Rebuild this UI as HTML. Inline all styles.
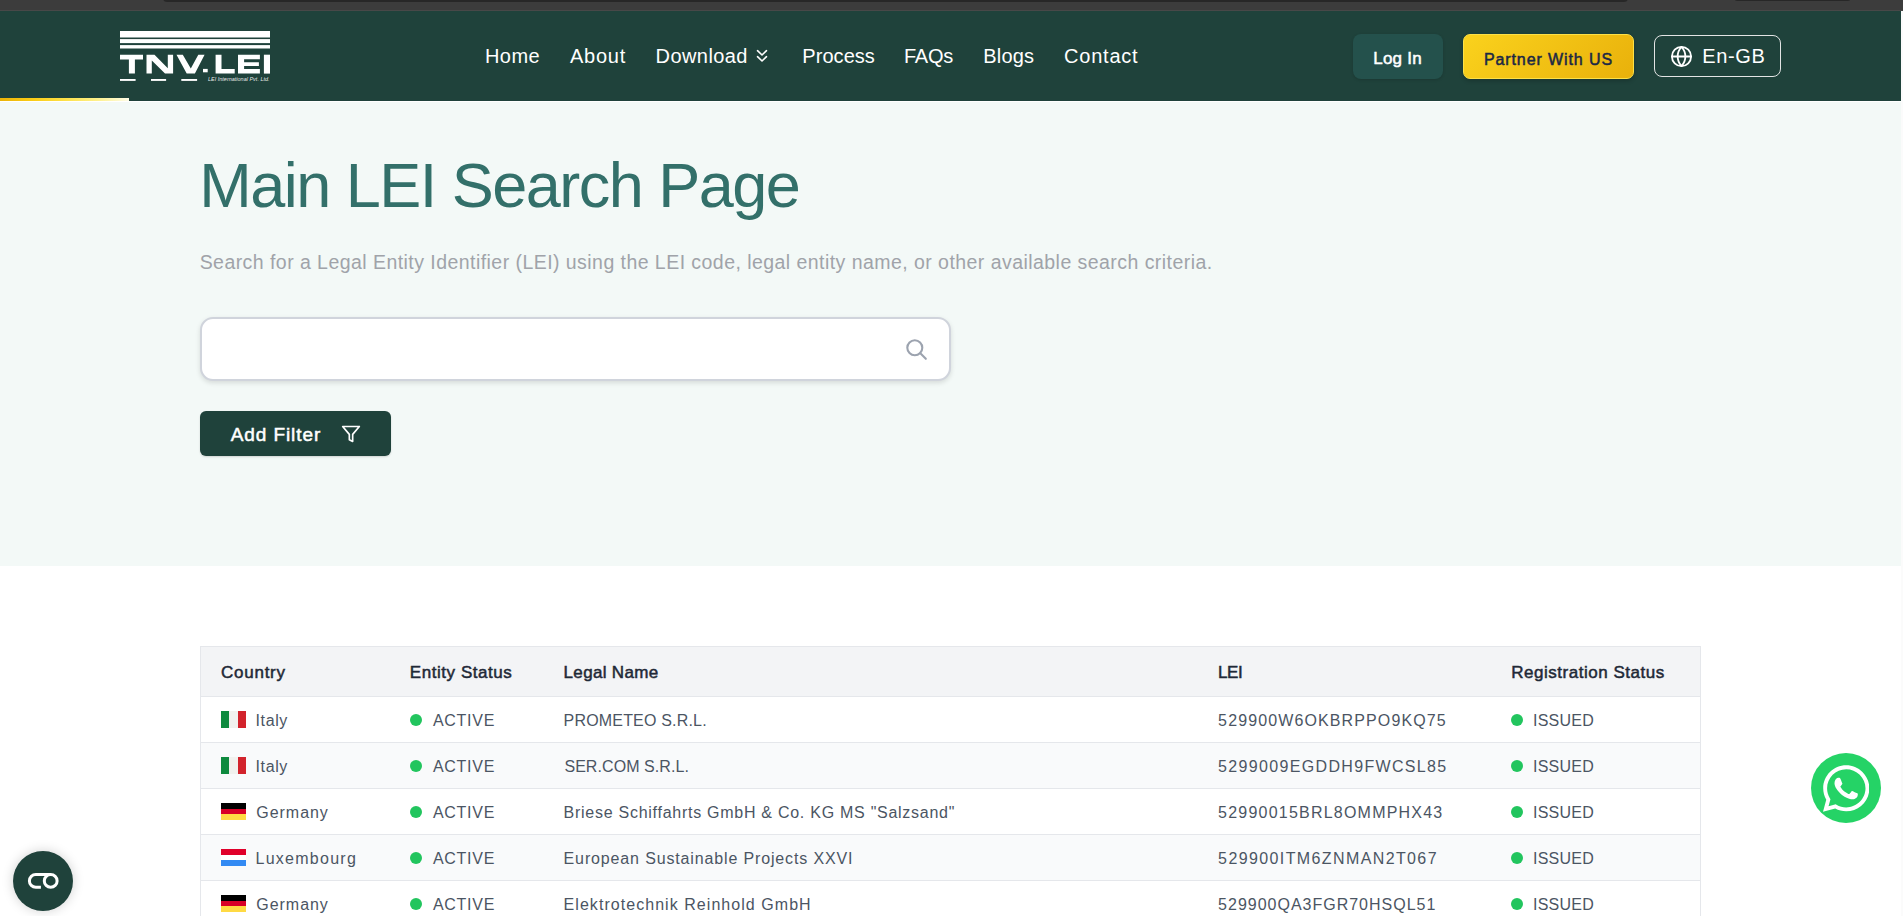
<!DOCTYPE html>
<html><head><meta charset="utf-8">
<style>
*{margin:0;padding:0;box-sizing:border-box}
html,body{width:1903px;height:916px;overflow:hidden;background:#fff;font-family:"Liberation Sans",sans-serif}
.a{position:absolute;white-space:nowrap}
.tx{line-height:1}
#topbar{left:0;top:0;width:1903px;height:11px;background:#3c3c3c;overflow:hidden}
#topbar .hl{position:absolute;left:0;top:10px;width:1903px;height:1px;background:#484848}
#topbar .t1{position:absolute;left:163px;top:-6px;width:1465px;height:8px;background:#272727;border-radius:6px}
#topbar .t2{position:absolute;left:1734px;top:-6px;width:117px;height:7px;background:#272727;border-radius:6px}
#header{left:0;top:11px;width:1901px;height:90px;background:#1f423b}
#scroll{left:1901px;top:11px;width:2px;height:905px;background:#fbfbfb}
#whiteline{left:0;top:101px;width:1901px;height:1px;background:#fff}
#progress{left:0;top:98px;width:129px;height:3px;background:linear-gradient(90deg,#eab308 0%,#facc15 25%,#fde047 50%,#fef08a 75%,#fefce8 100%)}
#hero{left:0;top:102px;width:1901px;height:464px;background:#f3f9f7}
.btn-login{left:1353px;top:34px;width:90px;height:45px;background:#24514c;border-radius:8px;box-shadow:0 1px 3px rgba(0,0,0,.15)}
.btn-partner{left:1463px;top:34px;width:171px;height:45px;border-radius:7px;background:linear-gradient(135deg,#fad21d,#e9b10b);border:1px solid #fde047;box-shadow:0 2px 4px rgba(0,0,0,.2)}
.btn-lang{left:1654px;top:35px;width:127px;height:42px;border:1.5px solid #e2e4e4;border-radius:8px}
.search{left:200px;top:317px;width:751px;height:64px;background:#fff;border:2px solid #d0d4dc;border-radius:13px;box-shadow:0 2px 5px rgba(0,0,0,.12)}
.filter{left:200px;top:411px;width:191px;height:45px;background:#1f423b;border-radius:6px;box-shadow:0 1px 2px rgba(0,0,0,.15)}
.tbl{left:200px;top:646px;width:1501px;height:300px;border:1px solid #e5e7eb;background:#fff}
.thead{left:201px;top:647px;width:1499px;height:49px;background:#f3f4f6}
.hline{left:201px;width:1499px;height:1px;background:#e5e7eb}
.zebra{left:201px;width:1499px;height:45px;background:#f9fafb}
.dot{width:12px;height:12px;border-radius:50%;background:#22c55e}
.flag{width:25px;height:17px;overflow:hidden}
.flag i{display:block;position:absolute}
#wa{left:1811px;top:753px;width:70px;height:70px;border-radius:50%;background:#25d366}
#acc{left:13px;top:851px;width:60px;height:60px;border-radius:50%;background:#1f423b;box-shadow:0 0 12px rgba(0,0,0,.18)}

</style></head><body>
<div id="topbar" class="a"><div class="t1"></div><div class="t2"></div><div class="hl"></div></div>
<div id="header" class="a"></div>
<div id="whiteline" class="a"></div>
<div id="hero" class="a"></div>
<div id="progress" class="a"></div>
<div id="scroll" class="a"></div>
<svg class="a" style="left:120px;top:31px" width="151" height="52" viewBox="0 0 151 52">
 <g fill="#fff">
  <rect x="0" y="0" width="150" height="6.5"/>
  <rect x="0" y="8.1" width="150" height="4"/>
  <rect x="0" y="14.1" width="150" height="3.4"/>
  <path d="M0 23.7H23V28.4H14.9V42.6H8.9V28.4H0Z"/>
  <path d="M26.5 42.6V23.7H34.5L47.8 37.2V23.7H53.1V42.6H45L31.8 29.6V42.6Z"/>
  <path d="M56.5 23.7H62.8L70.8 37.5L78.3 23.7H84.6L74.9 42.6H66.7Z"/>
  <rect x="83" y="37.9" width="4.7" height="3.4"/>
  <path d="M95.6 23.7H101.5V37.9H114.7V42.6H95.6Z"/>
  <path d="M118 23.7H139.9V28.3H124.1V31.2H138.9V35H124.1V38.1H139.9V42.6H118Z"/>
  <rect x="143.9" y="23.7" width="6.1" height="18.9"/>
  <rect x="0" y="48" width="15.6" height="1.9"/>
  <rect x="31" y="48" width="15.1" height="1.9"/>
  <rect x="61.3" y="48" width="15.8" height="1.9"/>
 </g>
 <text x="88" y="50" font-family="Liberation Sans" font-size="5.2" font-style="italic" fill="#fff" fill-opacity=".9" textLength="61.6" lengthAdjust="spacingAndGlyphs">LEI International Pvt. Ltd.</text>
</svg>
<svg class="a" style="left:755px;top:48px" width="14" height="16" viewBox="0 0 14 16"><path d="M2.5 2.7 L7 7 L11.5 2.7 M2.5 8.7 L7 13 L11.5 8.7" fill="none" stroke="#fff" stroke-width="1.6" stroke-linecap="round" stroke-linejoin="round"/></svg>
<div class="a btn-login"></div>
<div class="a btn-partner"></div>
<div class="a btn-lang"></div>
<svg class="a" style="left:1670px;top:44.9px" width="23" height="23" viewBox="0 0 24 24" fill="none" stroke="#fff" stroke-width="1.9" stroke-linecap="round" stroke-linejoin="round"><circle cx="12" cy="12" r="10"/><path d="M12 2a14.5 14.5 0 0 0 0 20 14.5 14.5 0 0 0 0-20"/><path d="M2 12h20"/></svg>
<div class="a search"></div>
<svg class="a" style="left:900px;top:334px" width="32" height="32" viewBox="0 0 32 32" fill="none" stroke="#9ca3af" stroke-width="2.1" stroke-linecap="round"><circle cx="14.8" cy="13.8" r="7.5"/><path d="M20.3 19.3L25.8 24.8"/></svg>
<div class="a filter"></div>
<svg class="a" style="left:340.9px;top:423.8px" width="20" height="20" viewBox="0 0 24 24" fill="none" stroke="#fff" stroke-width="2" stroke-linecap="round" stroke-linejoin="round"><polygon points="22 3 2 3 10 12.46 10 19 14 21 14 12.46 22 3"/></svg>
<div class="a tbl"></div>
<div class="a thead"></div>
<div class="a hline" style="top:696px"></div>
<div class="a zebra" style="top:743px"></div>
<div class="a hline" style="top:742px"></div>
<div class="a hline" style="top:788px"></div>
<div class="a zebra" style="top:835px"></div>
<div class="a hline" style="top:834px"></div>
<div class="a hline" style="top:880px"></div>
<div class="a flag" style="left:221px;top:711px"><i style="left:0;top:0;width:8.4px;height:17px;background:#0e8a3e"></i><i style="left:8.4px;top:0;width:8.3px;height:17px;background:#f1f1ee"></i><i style="left:16.7px;top:0;width:8.3px;height:17px;background:#d2232c"></i></div>
<div class="a dot" style="left:410px;top:714px"></div>
<div class="a dot" style="left:1511px;top:714px"></div>
<div class="a flag" style="left:221px;top:757px"><i style="left:0;top:0;width:8.4px;height:17px;background:#0e8a3e"></i><i style="left:8.4px;top:0;width:8.3px;height:17px;background:#f1f1ee"></i><i style="left:16.7px;top:0;width:8.3px;height:17px;background:#d2232c"></i></div>
<div class="a dot" style="left:410px;top:760px"></div>
<div class="a dot" style="left:1511px;top:760px"></div>
<div class="a flag" style="left:221px;top:803px"><i style="left:0;top:0;width:25px;height:5.7px;background:#000"></i><i style="left:0;top:5.7px;width:25px;height:5.6px;background:#d80027"></i><i style="left:0;top:11.3px;width:25px;height:5.7px;background:#ffda44"></i></div>
<div class="a dot" style="left:410px;top:806px"></div>
<div class="a dot" style="left:1511px;top:806px"></div>
<div class="a flag" style="left:221px;top:849px"><i style="left:0;top:0;width:25px;height:5.7px;background:#e0002a"></i><i style="left:0;top:5.7px;width:25px;height:5.6px;background:#fff"></i><i style="left:0;top:11.3px;width:25px;height:5.7px;background:#338af3"></i></div>
<div class="a dot" style="left:410px;top:852px"></div>
<div class="a dot" style="left:1511px;top:852px"></div>
<div class="a flag" style="left:221px;top:895px"><i style="left:0;top:0;width:25px;height:5.7px;background:#000"></i><i style="left:0;top:5.7px;width:25px;height:5.6px;background:#d80027"></i><i style="left:0;top:11.3px;width:25px;height:5.7px;background:#ffda44"></i></div>
<div class="a dot" style="left:410px;top:898px"></div>
<div class="a dot" style="left:1511px;top:898px"></div>
<div class="a tx" id="n1" style="left:484.88px;top:45.94px;font-size:20px;letter-spacing:0.480px;color:#ffffff;">Home</div>
<div class="a tx" id="n2" style="left:570.0px;top:45.94px;font-size:20px;letter-spacing:0.739px;color:#ffffff;">About</div>
<div class="a tx" id="n3" style="left:655.56px;top:45.94px;font-size:20px;letter-spacing:0.425px;color:#ffffff;">Download</div>
<div class="a tx" id="n4" style="left:802.28px;top:45.94px;font-size:20px;letter-spacing:0.060px;color:#ffffff;">Process</div>
<div class="a tx" id="n5" style="left:904.0px;top:45.94px;font-size:20px;letter-spacing:-0.270px;color:#ffffff;">FAQs</div>
<div class="a tx" id="n6" style="left:983.28px;top:45.94px;font-size:20px;letter-spacing:0.206px;color:#ffffff;">Blogs</div>
<div class="a tx" id="n7" style="left:1064.12px;top:45.94px;font-size:20px;letter-spacing:0.765px;color:#ffffff;">Contact</div>
<div class="a tx" id="login" style="left:1373.2px;top:49.76px;font-size:17px;letter-spacing:0.234px;color:#ffffff;-webkit-text-stroke:0.5px #ffffff;">Log In</div>
<div class="a tx" id="partner" style="left:1483.88px;top:52.38px;font-size:16px;letter-spacing:0.906px;color:#1b2845;-webkit-text-stroke:0.5px #1b2845;">Partner With US</div>
<div class="a tx" id="lang" style="left:1702.28px;top:45.80px;font-size:20px;letter-spacing:0.611px;color:#ffffff;">En-GB</div>
<div class="a tx" id="h1" style="left:199.2px;top:154.08px;font-size:63px;letter-spacing:-1.516px;color:#33706a;">Main LEI Search Page</div>
<div class="a tx" id="sub" style="left:199.64px;top:252.84px;font-size:19.5px;letter-spacing:0.450px;color:#a0a3a9;">Search for a Legal Entity Identifier (LEI) using the LEI code, legal entity name, or other available search criteria.</div>
<div class="a tx" id="filt" style="left:230.8px;top:425.32px;font-size:19px;letter-spacing:0.900px;color:#ffffff;-webkit-text-stroke:0.5px #ffffff;">Add Filter</div>
<div class="a tx" id="th1" style="left:221.08px;top:664.10px;font-size:17px;letter-spacing:0.735px;color:#1f2937;-webkit-text-stroke:0.5px #1f2937;">Country</div>
<div class="a tx" id="th2" style="left:409.84px;top:664.10px;font-size:17px;letter-spacing:0.544px;color:#1f2937;-webkit-text-stroke:0.5px #1f2937;">Entity Status</div>
<div class="a tx" id="th3" style="left:563.6px;top:664.10px;font-size:17px;letter-spacing:0.320px;color:#1f2937;-webkit-text-stroke:0.5px #1f2937;">Legal Name</div>
<div class="a tx" id="th4" style="left:1218.12px;top:664.10px;font-size:17px;letter-spacing:-0.450px;color:#1f2937;-webkit-text-stroke:0.5px #1f2937;">LEI</div>
<div class="a tx" id="th5" style="left:1511.2px;top:664.10px;font-size:17px;letter-spacing:0.525px;color:#1f2937;-webkit-text-stroke:0.5px #1f2937;">Registration Status</div>
<div class="a tx" id="r0c" style="left:255.56px;top:712.54px;font-size:16px;letter-spacing:0.604px;color:#4b5563;">Italy</div>
<div class="a tx" id="r0s" style="left:432.92px;top:712.54px;font-size:16px;letter-spacing:0.738px;color:#4b5563;">ACTIVE</div>
<div class="a tx" id="r0n" style="left:563.6px;top:712.54px;font-size:16px;letter-spacing:0.180px;color:#4b5563;">PROMETEO S.R.L.</div>
<div class="a tx" id="r0l" style="left:1218.12px;top:712.54px;font-size:16px;letter-spacing:1.118px;color:#4b5563;">529900W6OKBRPPO9KQ75</div>
<div class="a tx" id="r0i" style="left:1533.04px;top:712.54px;font-size:16px;letter-spacing:0.234px;color:#4b5563;">ISSUED</div>
<div class="a tx" id="r1c" style="left:255.56px;top:758.54px;font-size:16px;letter-spacing:0.604px;color:#4b5563;">Italy</div>
<div class="a tx" id="r1s" style="left:432.92px;top:758.54px;font-size:16px;letter-spacing:0.738px;color:#4b5563;">ACTIVE</div>
<div class="a tx" id="r1n" style="left:564.4px;top:758.54px;font-size:16px;letter-spacing:0.069px;color:#4b5563;">SER.COM S.R.L.</div>
<div class="a tx" id="r1l" style="left:1218.12px;top:758.54px;font-size:16px;letter-spacing:1.331px;color:#4b5563;">5299009EGDDH9FWCSL85</div>
<div class="a tx" id="r1i" style="left:1533.04px;top:758.54px;font-size:16px;letter-spacing:0.234px;color:#4b5563;">ISSUED</div>
<div class="a tx" id="r2c" style="left:256.36px;top:804.54px;font-size:16px;letter-spacing:0.945px;color:#4b5563;">Germany</div>
<div class="a tx" id="r2s" style="left:432.92px;top:804.54px;font-size:16px;letter-spacing:0.738px;color:#4b5563;">ACTIVE</div>
<div class="a tx" id="r2n" style="left:563.6px;top:804.54px;font-size:16px;letter-spacing:0.732px;color:#4b5563;">Briese Schiffahrts GmbH &amp; Co. KG MS "Salzsand"</div>
<div class="a tx" id="r2l" style="left:1218.12px;top:804.54px;font-size:16px;letter-spacing:1.218px;color:#4b5563;">52990015BRL8OMMPHX43</div>
<div class="a tx" id="r2i" style="left:1533.04px;top:804.54px;font-size:16px;letter-spacing:0.234px;color:#4b5563;">ISSUED</div>
<div class="a tx" id="r3c" style="left:255.56px;top:850.54px;font-size:16px;letter-spacing:1.260px;color:#4b5563;">Luxembourg</div>
<div class="a tx" id="r3s" style="left:432.92px;top:850.54px;font-size:16px;letter-spacing:0.738px;color:#4b5563;">ACTIVE</div>
<div class="a tx" id="r3n" style="left:563.6px;top:850.54px;font-size:16px;letter-spacing:0.856px;color:#4b5563;">European Sustainable Projects XXVI</div>
<div class="a tx" id="r3l" style="left:1218.12px;top:850.54px;font-size:16px;letter-spacing:1.387px;color:#4b5563;">529900ITM6ZNMAN2T067</div>
<div class="a tx" id="r3i" style="left:1533.04px;top:850.54px;font-size:16px;letter-spacing:0.234px;color:#4b5563;">ISSUED</div>
<div class="a tx" id="r4c" style="left:256.36px;top:896.54px;font-size:16px;letter-spacing:0.945px;color:#4b5563;">Germany</div>
<div class="a tx" id="r4s" style="left:432.92px;top:896.54px;font-size:16px;letter-spacing:0.738px;color:#4b5563;">ACTIVE</div>
<div class="a tx" id="r4n" style="left:563.6px;top:896.54px;font-size:16px;letter-spacing:1.047px;color:#4b5563;">Elektrotechnik Reinhold GmbH</div>
<div class="a tx" id="r4l" style="left:1218.12px;top:896.54px;font-size:16px;letter-spacing:0.995px;color:#4b5563;">529900QA3FGR70HSQL51</div>
<div class="a tx" id="r4i" style="left:1533.04px;top:896.54px;font-size:16px;letter-spacing:0.234px;color:#4b5563;">ISSUED</div>
<div id="wa" class="a"></div>
<svg class="a" style="left:1822.7px;top:761.7px" width="46.4" height="53" viewBox="0 0 448 512"><path fill="#fff" d="M380.9 97.1C339 55.1 283.2 32 223.9 32c-122.4 0-222 99.6-222 222 0 39.1 10.2 77.3 29.6 111L0 480l117.7-30.9c32.4 17.7 68.9 27 106.1 27h.1c122.3 0 224.1-99.6 224.1-222 0-59.3-25.2-115-67.1-157zm-157 341.6c-33.2 0-65.7-8.9-94-25.7l-6.7-4-69.8 18.3L72 359.2l-4.4-7c-18.5-29.4-28.2-63.3-28.2-98.2 0-101.7 82.8-184.5 184.6-184.5 49.3 0 95.6 19.2 130.4 54.1 34.8 34.9 56.2 81.2 56.1 130.5 0 101.8-84.9 184.6-186.6 184.6zm101.2-138.2c-5.5-2.8-32.8-16.2-37.9-18-5.1-1.9-8.8-2.8-12.5 2.8-3.7 5.6-14.3 18-17.6 21.8-3.2 3.7-6.5 4.2-12 1.4-32.6-16.3-54-29.1-75.5-66-5.7-9.8 5.7-9.1 16.3-30.3 1.8-3.7.9-6.9-.5-9.7-1.4-2.8-12.5-30.1-17.1-41.2-4.5-10.8-9.1-9.3-12.5-9.5-3.2-.2-6.9-.2-10.6-.2-3.7 0-9.7 1.4-14.8 6.9-5.1 5.6-19.4 19-19.4 46.3 0 27.3 19.9 53.7 22.6 57.4 2.8 3.7 39.1 59.7 94.8 83.8 35.2 15.2 49 16.5 66.6 13.9 10.7-1.6 32.8-13.4 37.4-26.4 4.6-13 4.6-24.1 3.2-26.4-1.3-2.5-5-3.9-10.5-6.6z"/></svg>
<div id="acc" class="a"></div>
<svg class="a" style="left:0;top:850px" width="80" height="66" viewBox="0 850 80 66" fill="none" stroke="#fff" stroke-width="3"><path d="M40.9 887.3H35.8A6.4 6.4 0 0 1 35.8 874.5H50.7"/><circle cx="50.7" cy="880.9" r="6.4"/></svg>

</body></html>
